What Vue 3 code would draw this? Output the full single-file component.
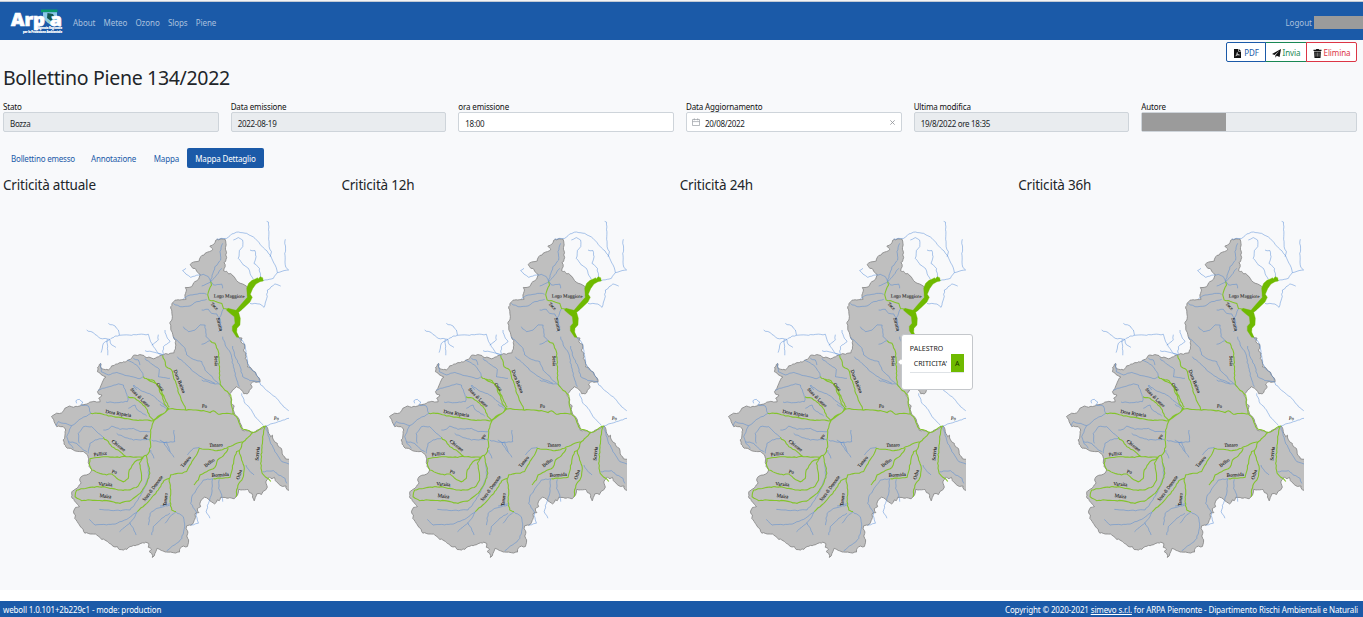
<script setup>
const navLinks = ['About', 'Meteo', 'Ozono', 'Slops', 'Piene']
const fields = [
  { label: 'Stato', value: 'Bozza', kind: 'off' },
  { label: 'Data emissione', value: '2022-08-19', kind: 'off' },
  { label: 'ora emissione', value: '18:00', kind: 'on' },
  { label: 'Data Aggiornamento', value: '20/08/2022', kind: 'date' },
  { label: 'Ultima modifica', value: '19/8/2022 ore 18:35', kind: 'off' },
  { label: 'Autore', value: '', kind: 'hidden' }
]
const tabs = ['Bollettino emesso', 'Annotazione', 'Mappa', 'Mappa Dettaglio']
const maps = ['attuale', '12h', '24h', '36h']

// Map geometry is stored per quadrant; each quadrant has its own origin.
const origin = { A: [0, 0], B: [360, 0], C: [0, 510], D: [360, 510] }
function parse(quad, text) {
  const [ox, oy] = origin[quad]
  return text.trim().split(/\s+/).map((p) => {
    const [x, y] = p.split(',').map(Number)
    return [x + ox, y + oy]
  })
}
// Breaks straight runs into short uneven steps, like a surveyed line.
function rough(points, step, amount) {
  let seed = 7
  const rnd = () => {
    seed = (seed * 16807) % 2147483647
    return seed / 2147483647 - 0.5
  }
  let d = `M${points[0][0]} ${points[0][1]}`
  for (let i = 1; i < points.length; i++) {
    const [x0, y0] = points[i - 1]
    const [x1, y1] = points[i]
    const n = Math.max(1, Math.round(Math.hypot(x1 - x0, y1 - y0) / step))
    for (let k = 1; k <= n; k++) {
      const t = k / n
      const a = k === n ? amount * 0.3 : amount
      const x = x0 + (x1 - x0) * t + rnd() * a
      const y = y0 + (y1 - y0) * t + rnd() * a
      d += `L${x.toFixed(1)} ${y.toFixed(1)}`
    }
  }
  return d
}
const border = [
  ...parse('B', '172,88 195,87 198,105 196,118 199,128 198,148 192,158 196,170 190,182 200,184 206,192 215,193 222,200 230,212 240,220 252,224 264,232 266,245 262,258 272,265 262,278 245,296 228,312 238,330 228,350 224,362 235,380 246,384 243,395 254,404 250,420 258,430 256,445 263,460 262,470 270,472 278,482 286,486 290,497 298,505 300,516 278,516 272,522 276,532'),
  ...parse('D', '268,31 262,42 252,42 248,34 238,24 228,20 218,30 214,38 207,42 212,52 216,60 214,70 222,78 220,90 224,102 234,112 240,128 245,138 246,150 262,152 280,157 300,148 318,138 324,150 326,160 332,170 337,166 340,178 344,186 352,190 355,200 364,206 366,220 376,236 390,238 390,330 380,328 378,318 368,320 358,314 350,306 343,292 336,296 328,290 320,300 318,310 322,322 318,330 310,334 305,344 298,340 290,342 286,352 282,363 278,352 276,340 268,338 264,328 236,328 234,340 228,350 222,356 205,354 195,352 182,352 178,362 172,360 164,372 155,366 146,358 134,352 125,358 120,370 122,380 112,386 117,398 105,402 106,412 100,428 92,436 80,438 78,446 84,456 80,468 86,480 82,500 70,498 60,505 58,516 40,518 20,516 5,512'),
  ...parse('C', '352,505 345,520 337,532 335,520 328,515 335,508 325,502 326,490 318,486 300,492 285,497 270,500 260,508 238,508 232,500 218,498 205,488 195,480 185,478 175,468 160,462 145,460 135,460 130,448 120,438 112,425 104,415 106,405 100,395 106,382 118,380 108,368 102,358 94,350 95,335 103,330 112,325 122,312 120,295 135,285 150,280 155,270 148,260 146,240 142,225 130,215 118,215 105,212 92,205 82,205 72,192 70,180 75,165 78,150 70,140 50,140 42,125 35,110 45,103 58,100 68,95 75,85 88,78 100,82 120,78 140,72 150,66 165,65 180,66 176,55 186,45 176,42 172,35 180,25 185,12'),
  ...parse('A', '190,510 198,502 180,490 172,485 173,472 182,460 184,475 205,480 215,468 240,458 255,456 272,448 280,436 300,434 315,440 340,446 355,440 370,434 390,430'),
  ...parse('B', '42,428 46,410 48,392 40,380 33,360 30,340 36,325 35,310 32,295 36,280 45,270 60,270 78,268 75,255 80,240 76,232 95,230 104,215 116,208 120,195 108,180 95,170 90,163 105,155 118,152 122,140 135,130 148,125 158,118 150,108 162,102 172,88')
]
const borderPath = rough(border, 6, 4) + 'Z'

const lines = (list) => list.map(([q, t]) => rough(parse(q, t), 7, 3)).join('')
const greenPath = lines([
  ['B', '152,215 155,225 147,240 143,255 147,270 165,274 185,280 190,295 205,298'],
  ['B', '150,392 165,400 175,425 177,450 178,490 180,522 195,541 212,555 214,570 214,585 219,610 232,625 242,650 250,658 280,667 318,648'],
  ['B', '8,436 14,450 18,470 35,480 40,500 48,520 50,525 56,550 68,578 77,598'],
  ['D', '-18,120 0,105 15,98 22,86 50,88 100,90 130,92 150,98 160,92 175,103 200,100 222,102'],
  ['D', '-35,-3 -18,2 -5,18 0,38 8,50 12,70 25,86'],
  ['C', '310,-10 325,0 350,12 365,35 378,65 388,82'],
  ['C', '264,50 285,55 305,70 322,90 328,108 342,122'],
  ['C', '152,100 180,100 205,108 240,112 280,120 342,122 365,105 388,85'],
  ['C', '342,122 332,150 330,180 332,200 325,220 308,232 258,230 225,232 190,230 150,236 148,250 155,270 175,278 200,285 215,282 230,295 250,305 265,295 268,270 285,245 308,232'],
  ['C', '190,172 205,185 215,200 240,215 258,230'],
  ['C', '110,330 150,322 190,320 235,330 270,330 295,318 305,300 302,270 298,250 310,232'],
  ['C', '110,330 105,350 125,362 150,360 200,362 240,370 275,360 300,340 320,310 330,280 322,245 318,225'],
  ['C', '292,395 325,365 350,335 372,302 388,295 392,285 420,280 440,275 455,245 472,220 478,205 500,208 525,212 560,205 595,188 610,185 640,157'],
  ['D', '28,295 32,330 30,365 35,390 48,395'],
  ['D', '102,315 115,300 120,285 140,275 165,262 172,240 190,228 205,205'],
  ['D', '160,296 210,292 217,265 222,235 230,215 238,212 250,185'],
  ['D', '238,212 245,240 253,265 248,295 236,310 230,330 228,350'],
  ['D', '315,140 308,170 305,210 302,250 306,280 318,292 325,296 332,305']
])
const bluePath = lines([
  ['B', '170,87 200,85 215,72 235,66 260,70 285,85 305,108 330,135 345,165 352,188 372,182 386,180 378,172 375,150 376,88'],
  ['B', '320,34 326,36 326,80 327,110 334,125 330,140'],
  ['B', '220,90 235,83 248,90 248,110 238,122 235,145 250,165 265,175 270,190 280,208'],
  ['B', '270,120 285,122 288,140 282,160 298,175 302,205'],
  ['B', '352,188 340,205 308,212'],
  ['B', '78,175 68,182 78,192 92,202 110,196 130,193 145,200 152,215'],
  ['B', '188,100 180,125 182,150 165,170 158,190 152,215'],
  ['B', '185,175 170,195 152,215 160,225 185,222 188,235'],
  ['B', '70,266 90,255 125,250 140,253'],
  ['B', '125,228 140,222 152,215'],
  ['B', '40,280 60,290 90,288 110,275 140,268'],
  ['B', '270,280 300,282 312,292 320,265 322,240 345,222 362,228'],
  ['B', '125,300 145,298 155,310 170,312 180,330 185,355 175,365'],
  ['B', '190,297 185,310 175,330'],
  ['B', '70,350 85,365 105,360 120,345 135,345 138,380 150,392 125,403'],
  ['B', '40,380 60,400 75,415 80,435 100,448 125,455 135,480 150,495 165,512 188,530'],
  ['B', '52,440 75,460 100,485 130,505 165,520'],
  ['B', '188,380 198,410 212,430 220,470 230,510 238,530'],
  ['D', '245,40 255,70 270,85 285,110 310,136'],
  ['B', '218,408 225,440 240,470 248,500 270,512 298,514 302,525 325,545 350,565 370,590 386,602'],
  ['B', '235,380 246,390 254,404 258,430 263,460 270,475 286,488 298,510'],
  ['B', '15,360 20,380 30,395 10,410 8,436'],
  ['D', '318,138 340,130 355,125 387,115'],
  ['D', '318,140 330,185 345,215 365,245 387,252'],
  ['D', '308,275 340,272 355,285 375,295 380,310'],
  ['D', '0,72 22,88'],
  ['D', '125,0 165,12 176,12'],
  ['D', '42,150 44,185 12,188 0,180'],
  ['D', '12,188 25,210 42,232'],
  ['D', '82,225 100,205 118,202'],
  ['D', '258,255 268,272 282,285'],
  ['D', '178,298 176,325 185,345 188,365'],
  ['D', '158,296 155,340 145,370 138,395 150,415'],
  ['D', '158,296 130,300 115,320 95,350 92,370 108,395 112,420 115,430 92,435'],
  ['D', '48,395 70,410 74,440 65,475 50,490 20,512'],
  ['D', '48,395 30,410 15,430'],
  ['D', '32,370 0,378'],
  ['C', '110,70 108,62 118,58 128,66 122,75 145,78 152,100 125,115 95,137 70,130 55,125 48,138'],
  ['C', '95,137 80,170 85,185 110,190 130,210 140,215'],
  ['C', '85,185 100,205'],
  ['C', '145,220 150,190 165,180 190,175'],
  ['C', '118,190 115,160 130,140 155,140 175,160 190,172'],
  ['C', '190,150 205,148 215,138 240,148 280,145 300,155 330,155'],
  ['C', '230,160 250,170 280,180 328,178'],
  ['C', '198,66 230,68 262,65 264,50'],
  ['C', '175,30 200,22 235,12 250,15 262,50'],
  ['C', '265,85 285,75 292,90 320,108'],
  ['C', '282,15 300,30 335,45 360,65 385,85'],
  ['C', '335,180 355,185 380,188 390,215'],
  ['C', '332,210 342,235'],
  ['C', '325,250 325,290 310,330 290,365 270,390 220,392 178,388'],
  ['C', '292,395 260,418 225,432 165,435 148,418'],
  ['C', '292,395 285,410 270,428 238,455'],
  ['C', '270,428 280,445 288,465'],
  ['C', '390,375 350,385 330,400 325,435'],
  ['C', '390,400 365,415 340,440 335,465'],
  ['A', '140,360 160,368 180,385 210,388 225,378 238,376 325,373 332,395 340,410 355,430 368,434'],
  ['A', '205,340 225,348 235,360 238,376'],
  ['A', '210,388 190,400 183,428'],
  ['A', '202,388 203,436'],
  ['A', '210,390 215,405 228,412'],
  ['A', '355,374 355,390 335,405'],
  ['A', '315,422 345,427 365,434'],
  ['A', '182,460 184,485 205,495 230,487 260,497 300,506 310,500 305,485 290,465 262,450'],
  ['A', '280,445 295,450 300,465'],
  ['A', '315,445 335,462 358,478 355,500 390,505'],
  ['A', '280,525 290,540']
])
const lakePath = 'M' + parse('B', '288,206 291,203 296,206 300,200 308,203 310,213 300,215 288,222 278,236 271,253 277,262 270,276 252,293 236,307 241,325 240,345 231,355 230,366 237,382 230,382 217,362 217,349 225,340 223,320 210,310 199,300 204,295 228,301 244,282 262,262 260,234 266,220 276,211').join('L') + 'Z'

const label = (text, q, x, y, r, w) => ({ text, x: x + origin[q][0], y: y + origin[q][1], r, w })
const labels = [
  label('Lago Maggiore', 'B', 207, 263, 1, 92),
  label('Toce', 'B', 160, 292, 45, 26),
  label('Strona', 'B', 174, 344, 75, 40),
  label('Sesia', 'B', 164, 453, 88, 32),
  label('Dora Baltea', 'B', 54, 516, 68, 74),
  label('Orco', 'C', 357, 24, 48, 28),
  label('Stura di Lanzo', 'C', 297, 56, 45, 76),
  label('Dora Riparia', 'C', 234, 105, 9, 78),
  label('Po', 'C', 322, 172, -78, 15),
  label('Chisone', 'C', 233, 201, 38, 48),
  label('Pellice', 'C', 182, 226, -8, 40),
  label('Po', 'C', 222, 280, 15, 15),
  label('Varaita', 'C', 196, 317, 4, 42),
  label('Maira', 'C', 196, 353, 7, 35),
  label('Stura di Demonte', 'C', 342, 328, -53, 92),
  label('Tanaro', 'C', 381, 359, -83, 40),
  label('Po', 'D', 133, 83, 4, 15),
  label('Po', 'D', 349, 120, 4, 15),
  label('Tanaro', 'D', 168, 200, -2, 41),
  label('Tanaro', 'D', 81, 248, -50, 40),
  label('Belbo', 'D', 151, 252, -38, 35),
  label('Bormida', 'D', 181, 289, -4, 52),
  label('Orba', 'D', 242, 285, -75, 30),
  label('Scrivia', 'D', 297, 221, -84, 42)
]
</script>

<template>
  <div class="page">
    <header class="nav">
      <svg class="logo" viewBox="0 0 52 25">
        <rect x="30" y="0.5" width="16.5" height="2.8" fill="#0b9a6a" />
        <path d="M32 3.3h14v4l-2 4.5-4 4.5-4-3-4-4z" fill="#8ccbe8" />
        <path d="M36.500 4l5.500 1 2 4-4 3-4-3z" fill="#17564f" />
        <path d="M35 10l4 3.500 5-3.500-3.500 6z" fill="#b9dc6a" />
        <text class="brand" x="0" y="17" textLength="34" lengthAdjust="spacingAndGlyphs">Arp</text>
        <text class="brand" x="39" y="17" textLength="12" lengthAdjust="spacingAndGlyphs">a</text>
        <text class="motto" x="27" y="20.4" textLength="24" lengthAdjust="spacingAndGlyphs">Agenzia Regionale</text>
        <text class="motto" x="12" y="24" textLength="39" lengthAdjust="spacingAndGlyphs">per la Protezione Ambientale</text>
      </svg>
      <nav class="links"><a v-for="l in navLinks" :key="l">{{ l }}</a></nav>
      <a class="logout">Logout</a>
      <span class="user"></span>
    </header>

    <main class="main">
      <div class="actions">
        <button class="btn pdf">
          <svg viewBox="0 0 8 9"><path d="M0.5 0h4.3v2.6h2.7V9H.5z M5.4 0l2.1 2H5.4z" fill="#111" /><path d="M2 7.2c1.3-1 2-2.8 1.8-4M3.4 4.4c.5 1.2 1.5 1.7 2.9 1.6M2.6 6.2l2.6-.6" fill="none" stroke="#fff" stroke-width=".65" /></svg><span>PDF</span>
        </button>
        <button class="btn send">
          <svg viewBox="0 0 9 9"><path d="M9 0L7.6 8 4.7 6.8 3.4 8.8V6.3L7.4 1.8 2.5 5.9 0 4.9z" fill="#111" /></svg><span>Invia</span>
        </button>
        <button class="btn del">
          <svg viewBox="0 0 8 9"><path d="M0 .7h2.3L2.8 0h2.4l.5.7H8v1.2H0zM.6 2.4h6.8L7 9H1z" fill="#111" /><path d="M2.5 3.6v4M4 3.6v4M5.5 3.6v4" stroke="#fff" stroke-width=".4" /></svg><span>Elimina</span>
        </button>
      </div>

      <h1>Bollettino Piene 134/2022</h1>

      <div class="fields">
        <div v-for="f in fields" :key="f.label" class="field">
          <label>{{ f.label }}</label>
          <div class="input" :class="f.kind">
            <svg v-if="f.kind === 'date'" class="cal" viewBox="0 0 8 8"><path d="M.5 1.5h7v6h-7zM.5 3.6h7M2.3.3v2M5.7.3v2" fill="none" stroke="#9a9da3" stroke-width=".7" /></svg>
            <span v-if="f.kind === 'hidden'" class="mask"></span>
            <span v-else class="val">{{ f.value }}</span>
            <svg v-if="f.kind === 'date'" class="clear" viewBox="0 0 5 5"><path d="M.3 .3l4.400 4.400M4.700 .3l-4.400 4.400" stroke="#8f9297" stroke-width=".8" /></svg>
          </div>
        </div>
      </div>

      <div class="tabs">
        <a v-for="(t, i) in tabs" :key="t" :class="{ active: i === 3 }">{{ t }}</a>
      </div>

      <div class="maps">
        <section v-for="m in maps" :key="m" class="cell">
          <h2>Criticità {{ m }}</h2>
          <svg class="map" viewBox="0 0 747 1080">
            <path :d="borderPath" class="region" />
            <path :d="bluePath" class="minor" />
            <path :d="greenPath" class="major" />
            <path :d="lakePath" class="lake" />
            <text
              v-for="(l, i) in labels"
              :key="i"
              :transform="`translate(${l.x} ${l.y}) rotate(${l.r})`"
              :textLength="l.w"
              lengthAdjust="spacingAndGlyphs"
            >{{ l.text }}</text>
          </svg>
          <div v-if="m === '24h'" class="tip">
            <div class="station">PALESTRO</div>
            <div class="row"><span>CRITICITA'</span><b>A</b></div>
          </div>
        </section>
      </div>
    </main>

    <footer class="foot">
      <span class="version">weboll 1.0.101+2b229c1 - mode: production</span>
      <span class="copy">Copyright © 2020-2021 <u>simevo s.r.l.</u> for ARPA Piemonte - Dipartimento Rischi Ambientali e Naturali</span>
    </footer>
  </div>
</template>

<style>
body { background: #fff; overflow: hidden; }
</style>

<style scoped>
.page { box-sizing: border-box; height: 617px; display: flex; flex-direction: column; border-top: 1px solid #f3f4f6; font: 8px/12px "Noto Sans", "Open Sans", sans-serif; color: #212529; }
.nav { box-sizing: border-box; height: 39px; flex: none; background: #1b5aa8; border-top: 1px solid #c3cad5; display: flex; align-items: center; padding-left: 11px; padding-top: 3px; color: #a9c0de; }
.logo { width: 52px; height: 25px; margin-top: -3px; flex: none; overflow: visible; }
.brand { font: 800 18px "Open Sans", sans-serif; fill: #fff; stroke: #fff; stroke-width: .7; }
.motto { font: 700 2.500px "Open Sans", sans-serif; fill: #fff; stroke: #fff; stroke-width: .2; }
.links { display: flex; gap: 8.2px; margin-left: 10px; letter-spacing: -.07px; }
.logout { margin-left: auto; }
.user { width: 49px; height: 13px; margin-left: 2px; background: #9b9b9b; }
.main { height: 550px; flex: none; background: #f8f9fb; position: relative; padding: 2px 6px 0 3px; box-sizing: border-box; }
.actions { display: flex; justify-content: flex-end; height: 20px; }
.btn { box-sizing: border-box; height: 20px; border: 1px solid; background: #fff; display: flex; align-items: center; gap: 2px; padding: 2px 0 0; justify-content: center; font: inherit; letter-spacing: -.1px; margin-left: -1px; }
.btn svg { height: 9px; width: 9px; }
.pdf { width: 40px; color: #1b5aa8; border-radius: 2px 0 0 2px; position: relative; }
.send { width: 42px; color: #198754; }
.del { width: 51px; color: #dc3545; border-radius: 0 2px 2px 0; }
h1 { font-size: 19.5px; line-height: 24px; font-weight: 400; letter-spacing: -.32px; margin: 4px 0 0; height: 36px; white-space: nowrap; }
.fields { display: grid; grid-template-columns: repeat(6, 1fr); column-gap: 12px; }
.field label { display: block; height: 10px; line-height: 10px; color: #111; white-space: nowrap; letter-spacing: -.15px; }
.input { box-sizing: border-box; height: 20px; border: 1px solid #ced4da; border-radius: 2px; background: #fff; display: flex; align-items: center; padding: 3px 6px 0; color: #212529; letter-spacing: -.3px; }
.off, .hidden { background: #e9ecef; }
.hidden { padding: 0; }
.mask { width: 84px; height: 18px; background: #9b9b9b; }
.cal { width: 8px; height: 8px; margin: -3px 4px 0 -1px; }
.date .val { margin-left: 1px; }
.clear { width: 5px; height: 5px; margin-left: auto; margin-top: -3px; }
.tabs { display: flex; height: 20px; margin-top: 16px; color: #1b5aa8; letter-spacing: -.2px; }
.tabs a { padding: 5px 8px 0; box-sizing: border-box; height: 20px; white-space: nowrap; }
.tabs a:nth-child(3) { padding-left: 9.500px; letter-spacing: -.1px; }
.tabs .active { background: #1b5aa8; color: #fff; border-radius: 2px; width: 77px; letter-spacing: -.15px; }
.maps { display: grid; grid-template-columns: repeat(4, 338.4px); margin-top: 9px; }
.cell { position: relative; height: 394px; }
h2 { font-size: 13.5px; line-height: 17px; height: 33px; margin: 0; font-weight: 400; letter-spacing: -.2px; }
.map { display: block; width: 249px; height: 360px; margin-left: 37px; }
.region { fill: #bfbfbf; stroke: #888; stroke-width: 2.6; }
.minor { fill: none; stroke: #4a84d4; stroke-width: 2.8; opacity: .5; }
.major { fill: none; stroke: #83c32b; stroke-width: 3.2; }
.lake { fill: #6fba00; stroke: #6fba00; stroke-width: 1; }
.map text { font: 15px "Liberation Serif", serif; fill: #111; stroke: #111; stroke-width: .2; text-anchor: middle; }
.tip { position: absolute; left: 221px; top: 157px; width: 72px; height: 56px; box-sizing: border-box; border: 1px solid #c4c7cb; border-radius: 3px; background: #fff; padding: 8px 8px 0; font-size: 7px; color: #222; }
.tip::before { content: ""; position: absolute; left: -3px; top: 25px; width: 4px; height: 4px; background: #fff; transform: rotate(45deg); }
.station { line-height: 11px; height: 11px; }
.row { display: flex; height: 18px; border-bottom: 1px solid #dee2e6; justify-content: space-between; line-height: 19px; padding-left: 4px; }
.row b { width: 13px; height: 18px; background: #6fba00; text-align: center; font-weight: 400; color: #1b3300; }
.foot { height: 16px; flex: none; margin-top: 11px; background: #1b5aa8; color: #fff; display: flex; justify-content: space-between; line-height: 18px; padding: 0 5px 0 3px; white-space: nowrap; letter-spacing: -.145px; }
</style>
